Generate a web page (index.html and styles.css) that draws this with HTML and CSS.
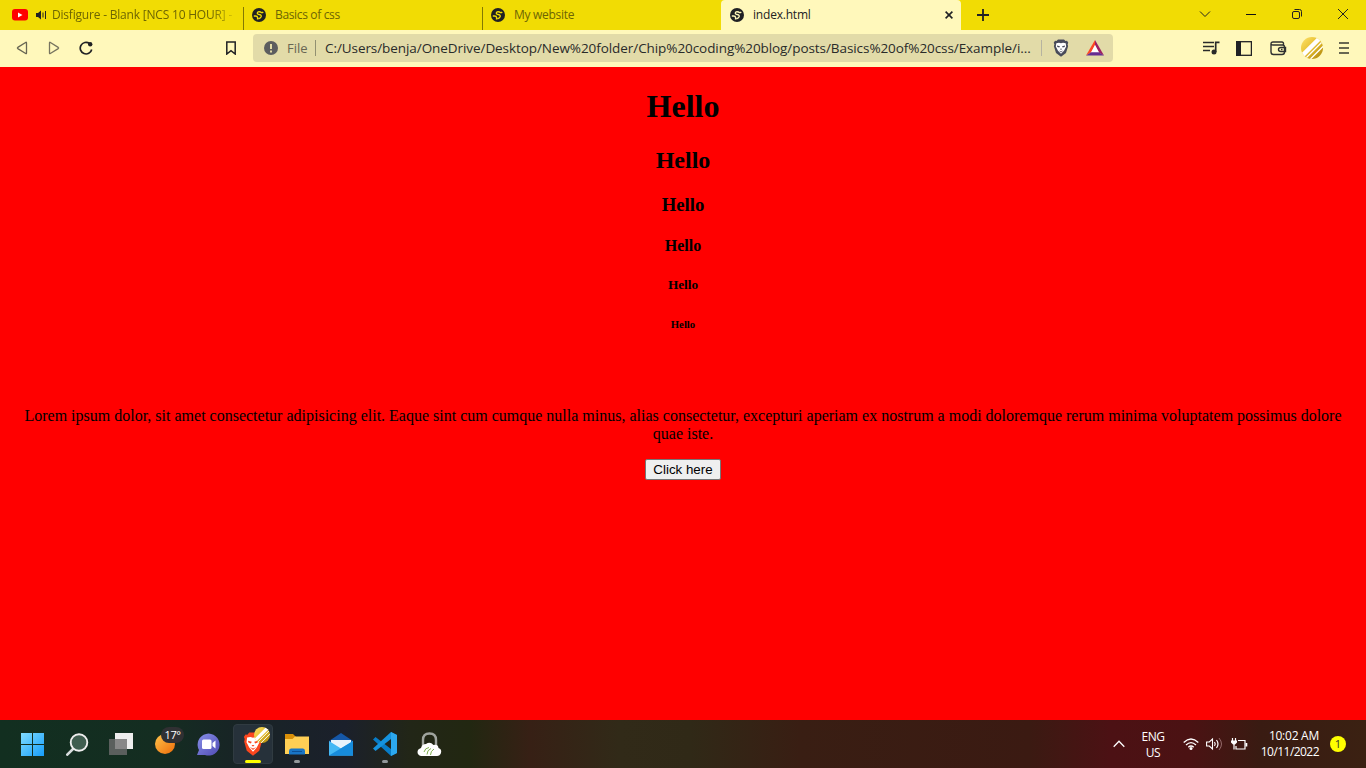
FILE: index.html
```html
<!DOCTYPE html>
<html lang="en">
<head>
<meta charset="utf-8">
<title>index.html</title>
<link rel="stylesheet" href="styles.css">
</head>
<body>
<svg class="defs" width="0" height="0">
  <symbol id="globe" viewBox="0 0 14 14"><circle cx="7" cy="7" r="7" fill="#202124"/><path d="M11.300 4.200Q9.800 5.200 8.500 4Q5.500 3.300 5.300 5.300Q5.500 6.500 8 6.700Q9.600 7.200 9.100 8.800Q8.500 10.300 6.500 10.800M1.800 8H3.500Q5.500 8 5.700 9.800L5.500 11.500" fill="none" stroke="currentColor" stroke-width="1.400"/></symbol>
  <symbol id="lion" viewBox="0 0 16 18"><path d="M3.500 2L5 .4h6L12.500 2l1.500-.2 1.300 2-.7 1.400.5 2L13 14l-5 3.800L3 14 .9 7.200l.5-2-.7-1.400 1.300-2Z" fill="currentColor"/><path d="M3.300 4.200L6 3.700 8 4.300 10 3.700 12.700 4.200 13.200 7.600 11 11.700 8 14.800 5 11.700 2.800 7.600Z" fill="#fff"/><path d="M4 6.500l3 .8-.7 1.300-2-.7ZM12 6.500l-3 .8.7 1.300 2-.7ZM6.800 9.700h2.400L8 11ZM5.500 11.300L8 12.400l2.500-1.100L8 13.500Z" fill="currentColor"/></symbol>
  <linearGradient id="gold" x1="0" y1="0" x2="1" y2="1"><stop stop-color="#ffe36b"/><stop offset=".5" stop-color="#e5bd2c"/><stop offset="1" stop-color="#a98008"/></linearGradient>
  <clipPath id="disc"><circle cx="11" cy="11" r="11"/></clipPath>
  <symbol id="avatar" viewBox="0 0 22 22"><g clip-path="url(#disc)"><path fill="url(#gold)" d="M0 0h22v22H0z"/><path d="M0 20L20 0" stroke="#fff" stroke-width="4.500"/><path d="M4.500 21.500L22 4M9.500 22L23 8.500" stroke="#fff" stroke-width="1.300"/></g></symbol>
</svg>

<header class="tabs">
  <div class="tab tab-media">
    <svg width="16" height="12" viewBox="0 0 16 12"><rect width="16" height="11.500" rx="3" fill="#f00"/><path d="M6 3.500v5L10.500 6Z" fill="#fff"/></svg>
    <svg class="sound" width="11" height="10" viewBox="0 0 11 10"><path d="M0 3h2L5 .5v9L2 7H0Z" fill="#202124"/><path d="M7 2.500v5M9.500 1v8" stroke="#202124" fill="none"/></svg>
    <span class="tab-text fade">Disfigure - Blank [NCS 10 HOUR] -</span>
  </div>
  <div class="tab ruled"><svg width="14" height="14"><use href="#globe"/></svg><span class="tab-text basics">Basics of css</span></div>
  <div class="tab ruled"><svg width="14" height="14"><use href="#globe"/></svg><span class="tab-text website">My website</span></div>
  <div class="tab active"><svg width="14" height="14"><use href="#globe"/></svg><span class="tab-text current">index.html</span>
    <svg class="close" width="8" height="8" viewBox="0 0 8 8"><path d="M.6.6l6.800 6.800M7.400.6L.6 7.400" stroke="#202124" stroke-width="1.600"/></svg></div>
  <svg class="plus" width="12" height="12" viewBox="0 0 12 12"><path d="M6 0v12M0 6h12" stroke="#202124" stroke-width="1.800"/></svg>
  <div class="window-buttons">
    <svg viewBox="0 0 12 12"><path d="M1 3.500l5 5 5-5" fill="none" stroke="#222"/></svg>
    <svg viewBox="0 0 12 12"><path d="M1 6.500h10" stroke="#111"/></svg>
    <svg viewBox="0 0 12 12"><rect x="1.500" y="3.500" width="7" height="7" rx="1.500" fill="none" stroke="#222"/><path d="M3.500 1.500H8.500Q10.500 1.500 10.500 3.500V8.500" fill="none" stroke="#222"/></svg>
    <svg viewBox="0 0 12 12"><path d="M1 1l10 10M11 1L1 11" stroke="#222"/></svg>
  </div>
</header>

<nav class="toolbar">
  <div class="nav-icons">
    <svg width="12" height="14" viewBox="0 0 12 14"><path d="M10 1.300Q10.500 1 10.500 2V12Q10.500 13 9.700 12.500L1.800 7.600Q1 7 1.800 6.400Z" fill="none" stroke="#686653" stroke-width="1.300"/></svg>
    <svg width="12" height="14" viewBox="0 0 12 14"><path d="M2 1.300Q1.500 1 1.500 2V12Q1.500 13 2.300 12.500L10.200 7.600Q11 7 10.200 6.400Z" fill="none" stroke="#77745f" stroke-width="1.300"/></svg>
    <svg class="reload" width="14" height="14" viewBox="0 0 14 14"><path d="M12.700 8.500A5.800 5.800 0 1 1 10.500 2.500" fill="none" stroke="#202124" stroke-width="1.700"/><circle cx="11.200" cy="3.200" r="2.200" fill="#202124"/></svg>
  </div>
  <svg class="bookmark" width="10" height="14" viewBox="0 0 10 14"><path d="M.8 1h8.400v12L5 9.600.8 13Z" fill="none" stroke="#202124" stroke-width="1.500"/></svg>
  <div class="address">
    <svg width="14" height="14" viewBox="0 0 14 14"><circle cx="7" cy="7" r="7" fill="#5c5d5f"/><path d="M7 3v5M7 9.500v2" stroke="#e2dba8" stroke-width="2"/></svg>
    <span class="scheme">File</span><i class="rule"></i>
    <span class="url">C:/Users/benja/OneDrive/Desktop/New%20folder/Chip%20coding%20blog/posts/Basics%20of%20css/Example/i...</span>
    <i class="rule pale"></i>
    <svg class="shield" width="16" height="18"><use href="#lion"/></svg>
    <svg width="18" height="16" viewBox="0 0 18 16"><path d="M9 0L0 15.500 5.500 12 9 5Z" fill="#ff4724"/><path d="M9 0l9 15.500-5.500-3.200L9 5Z" fill="#9e1f63"/><path d="M0 15.500h18l-5.500-3.500h-7Z" fill="#662d91"/><path d="M9 5L5 12.300h8Z" fill="#fff"/></svg>
  </div>
  <div class="tools">
    <svg width="17" height="14" viewBox="0 0 17 14"><path d="M0 1.500h11M0 5.500h11M0 9.500h7" stroke="#292a29" stroke-width="1.600"/><path d="M12.700 11V1.300h3.800" fill="none" stroke="#292a29" stroke-width="1.700"/><circle cx="11" cy="11" r="2.500" fill="#292a29"/></svg>
    <svg width="16" height="15" viewBox="0 0 16 15"><rect x=".6" y=".7" width="14.800" height="13.600" fill="none" stroke="#202124" stroke-width="1.300"/><path d="M0 0h5v15H0z" fill="#202124"/></svg>
    <svg class="wallet" width="17" height="15" viewBox="0 0 17 15"><path d="M13.500 4V2.500Q13.500 1 12 1H3Q1 1 1 3V11Q1 13.500 3.500 13.500H12Q14.500 13.500 14.500 11V6Q14.500 4 12.500 4H3Q1 4 1 2.800M15.500 6.500H11Q8.500 6.500 8.500 8.500T11 10.500H15.500Z" fill="none" stroke="#303130" stroke-width="1.400"/><path d="M11 8.500h1.500" stroke="#303130" stroke-width="1.500"/></svg>
    <svg class="profile" width="22" height="22"><use href="#avatar"/></svg>
    <svg class="menu" width="10" height="12" viewBox="0 0 10 12"><path d="M0 1h10M0 6h10M0 11h10" stroke="#393930" stroke-width="1.700"/></svg>
  </div>
</nav>

<main class="page">
  <h1>Hello</h1><h2>Hello</h2><h3>Hello</h3><h4>Hello</h4><h5>Hello</h5><h6>Hello</h6>
  <p>Lorem ipsum dolor, sit amet consectetur adipisicing elit. Eaque sint cum cumque nulla minus, alias consectetur, excepturi aperiam ex nostrum a modi doloremque rerum minima voluptatem possimus dolore quae iste.</p>
  <button>Click here</button>
</main>

<footer class="taskbar">
  <div class="apps">
    <div class="app start"><svg width="23" height="23" viewBox="0 0 23 23"><defs><linearGradient id="win" x1="0" y1="0" x2="1" y2="1" gradientUnits="objectBoundingBox"><stop stop-color="#80dcff"/><stop offset="1" stop-color="#169efa"/></linearGradient></defs><path d="M0 0h11v11H0zM12 0h11v11H12zM0 12h11v11H0zM12 12h11v11H12z" fill="url(#win)"/></svg></div>
    <div class="app"><svg width="23" height="23" viewBox="0 0 23 23"><path d="M7.500 15.500L1.300 21.700" stroke="#d8dddd" stroke-width="2.600" stroke-linecap="round"/><circle cx="13" cy="9.500" r="8.300" fill="#405e50" stroke="#eee" stroke-width="1.900"/></svg></div>
    <div class="app"><svg width="24" height="22" viewBox="0 0 24 22"><path d="M6 0h18v16H6z" fill="#eee"/><path d="M0 6h18v16H0z" fill="#5a5f5d"/><path d="M6 6h12v10H6z" fill="#888"/></svg></div>
    <div class="app weather"><svg width="20" height="20" viewBox="0 0 20 20"><defs><linearGradient id="sun" x2="1" y2="1"><stop stop-color="#ffc44b"/><stop offset="1" stop-color="#ed6c09"/></linearGradient></defs><circle cx="10" cy="10" r="10" fill="url(#sun)"/></svg><span class="temp">17°</span></div>
    <div class="app start"><svg width="23" height="23" viewBox="0 0 23 23"><defs><linearGradient id="chat" x1="0" x2="1" y2="1"><stop stop-color="#8890e8"/><stop offset="1" stop-color="#504bb5"/></linearGradient></defs><path d="M0 22l2-5A11 11 0 1 1 8 22Z" fill="url(#chat)"/><rect x="5" y="6.500" width="9.500" height="9.500" rx="1.500" fill="#fff"/><path d="M15.500 10L18.500 7.500v8l-3-2.500Z" fill="#fff"/></svg></div>
    <div class="app selected"><svg class="brave" width="20" height="24" viewBox="0 0 16 18" preserveAspectRatio="none"><use href="#lion" width="16" height="18"/></svg><svg class="badge" width="16" height="16"><use href="#avatar"/></svg></div>
    <div class="app running"><svg width="24" height="23" viewBox="0 0 24 23"><path d="M0 1h8l3 3v4H0z" fill="#d98f08"/><path d="M0 6h7.500L10 3.500h14V21H0z" fill="#ffcf55"/><path d="M4 21.500V18Q4 15.500 6 15.500H18Q20 15.500 20 18V21.500Z" fill="#1975c5"/><path d="M7 18.500h10" stroke="#0d4f94"/></svg></div>
    <div class="app"><svg width="24" height="23" viewBox="0 0 24 23"><path d="M0 8L12 0l12 8v14.500H0z" fill="#1557a7"/><path d="M2 7h20v4L12 16 2 11Z" fill="#e9f3fb"/><path d="M0 8l12 7.500L24 8v14.500H0z" fill="#45b8f4"/><path d="M0 22.500L24 8v14.500Z" fill="#178bdc"/></svg></div>
    <div class="app running"><svg width="24" height="24" viewBox="0 0 24 24"><path d="M18 0l6 3v18l-6 3L0 7.500 2.500 5 18 17Z" fill="#087cc7"/><path d="M18 0v7L2.500 19 0 16.500Z" fill="#1593df"/><path d="M18 0l6 3v18l-6 3Z" fill="#2ca8ee"/></svg></div>
    <div class="app"><svg width="25" height="25" viewBox="0 0 25 25"><path d="M6 14V8Q6 1.500 12.500 1.500T19 8v6" fill="none" stroke="#a0a49e" stroke-width="2.400"/><path d="M4 24Q.5 23 .5 20T4 16Q5 12 9 12Q13 9 16.500 13Q21 12 21.500 16Q25 17 24 21Q23 24 20 24Z" fill="#fff"/><path d="M7 20Q8 16 12 15.500M10 22.500Q10 18 14 16.500M13.500 23Q13.500 19 17 17" fill="none" stroke="#80ae4d" stroke-width="1"/></svg></div>
  </div>
  <div class="tray">
    <svg class="chevron" width="12" height="8" viewBox="0 0 12 8"><path d="M.7 6.700L6 1.300l5.300 5.400" fill="none" stroke="#fff" stroke-width="1.300"/></svg>
    <div class="language">ENG<br>US</div>
    <svg class="wifi" width="16" height="12" viewBox="0 0 16 12"><path d="M.7 4.500Q8-2.500 15.300 4.500M3 7Q8 2.200 13 7M5.300 9.200Q8 6.700 10.700 9.200" fill="none" stroke="#fff" stroke-width="1.300"/><circle cx="8" cy="10.500" r="1.500" fill="#fff"/></svg>
    <svg class="speaker" width="17" height="14" viewBox="0 0 17 14"><path d="M.6 5h2.700L6.500 2v10L3.300 9H.6Z" fill="none" stroke="#fff" stroke-width="1.100"/><path d="M8.500 5Q10 7 8.500 9M10.500 3Q13.500 7 10.500 11" fill="none" stroke="#fff" stroke-width="1.200"/><path d="M13 1Q18 7 13 13" fill="none" stroke="#956a6b"/></svg>
    <svg class="battery" width="17" height="13" viewBox="0 0 17 13"><path d="M7 2.500h7v8.500H5V8M1.500 0v3M4.500 0v3M3 5v6.500" fill="none" stroke="#fff" stroke-width="1.200"/><path d="M0 2.500h6v2L4 6.500H2L0 4.500ZM14.500 5h1.800v3.500h-1.800z" fill="#fff"/></svg>
    <div class="clock"><span class="time">10:02 AM</span><span class="date">10/11/2022</span></div>
    <div class="notice">1</div>
  </div>
</footer>
</body>
</html>
```

FILE: styles.css
```css
* { box-sizing: border-box; }
body { margin: 0; width: 1366px; height: 768px; overflow: hidden; display: flex; flex-direction: column; font-family: "Open Sans", "Noto Sans", sans-serif; }
svg { display: block; flex: none; }
.defs { position: absolute; }
.tabs { height: 30px; flex: none; display: flex; background: #f1dc04; color: #f1dc04; }
.tab { display: flex; align-items: center; width: 239px; height: 30px; padding-left: 9px; }
.tab-media { width: 243px; padding-left: 12px; }
.sound { margin: 0 5px 0 8px; }
.tab-text { font-size: 12px; line-height: 18px; color: #6d6503; white-space: nowrap; margin-left: 9px; letter-spacing: -.2px; }
.basics { letter-spacing: -.35px; }
.website { letter-spacing: -.3px; }
.fade { width: 181px; margin-left: 0; overflow: hidden; -webkit-mask-image: linear-gradient(to right, #000 88%, #0003); }
.ruled { background: linear-gradient(#837902, #837902) 0 100% / 1px 23px no-repeat; }
.active { width: 240px; background: #fff8bb; color: #fff8bb; border-radius: 4px 4px 0 0; }
.current { color: #222; }
.close { margin-left: auto; margin-right: 8px; }
.plus { margin: 9px 0 0 16px; }
.window-buttons { display: flex; gap: 34px; margin: 8px 17px 0 auto; }
.window-buttons svg { width: 12px; height: 12px; }
.toolbar { height: 37px; flex: none; display: flex; align-items: center; background: #fff8bb; padding-bottom: 1px; }
.nav-icons { display: flex; align-items: center; gap: 20px; padding-left: 16px; }
.reload { margin-left: -1px; }
.bookmark { margin-left: 133px; }
.address { width: 860px; height: 28px; margin-left: 17px; background: #e2dba8; border-radius: 4px; display: flex; align-items: center; padding: 0 9px 0 11px; color: #292a29; font-size: 14px; white-space: nowrap; }
.scheme { color: #686653; font-size: 13px; width: 21px; margin-left: 9px; }
.rule { width: 1px; height: 16px; background: #929071; margin: 0 9px 0 7px; }
.url { width: 708px; font-size: 13.5px; letter-spacing: -.07px; }
.pale { background: #b6b3a0; margin: 0 11px 0 9px; }
.shield { color: #484b59; margin-right: 17px; }
.tools { display: flex; align-items: center; margin-left: auto; margin-right: 17px; gap: 16px; }
.wallet { margin-left: 2px; }
.profile { margin-left: -2px; }
.page { height: 653px; flex: none; background: #f00; padding: 0 8px; text-align: center; color: #000; font: 16px "Liberation Serif", "Times New Roman", serif; display: flow-root; }
.page p { margin: 77px 0 16px; line-height: 18px; }
.page button { width: 76px; height: 21px; padding: 0; font: 13.33px "Liberation Sans", Arial, sans-serif; background: #efefef; border: 1px solid #767676; border-radius: 2px; color: #000; }
.taskbar { height: 48px; flex: none; display: flex; background: linear-gradient(90deg, #122f20 0, #142d21 160px, #182326 245px, #1b202b 345px, #222617 410px, #222711 470px, #372015 530px, #312a18 620px, #302917 690px, #391e13 800px, #3b1a12 1030px, #4c1114 1110px, #4b1213 1190px, #391b12 1260px, #3b2112 1366px); color: #fff; }
.apps { display: flex; padding-left: 11px; }
.app { width: 44px; height: 48px; position: relative; display: flex; align-items: center; justify-content: center; }
.start { padding-right: 1px; }
.temp { position: absolute; left: 18px; top: 7px; width: 23px; height: 16px; border-radius: 8px; background: #303033; color: #fff; font-size: 11px; line-height: 16px; text-align: center; letter-spacing: -.5px; }
.selected::before { content: ""; position: absolute; inset: 4px 2px; border-radius: 4px; background: #26313a; border: 1px solid #303b41; }
.selected::after { content: ""; position: absolute; left: 14px; bottom: 5px; width: 16px; height: 3px; border-radius: 2px; background: #ff0; }
.brave { position: relative; color: #fb461e; }
.badge { position: absolute; left: 23px; top: 7px; }
.running::after { content: ""; position: absolute; left: 19px; bottom: 5px; width: 6px; height: 3px; border-radius: 2px; background: #92989b; }
.tray { display: flex; align-items: center; margin-left: auto; padding-right: 20px; font-size: 12px; line-height: 16px; }
.language { width: 30px; margin: 2px 15px 0 13px; text-align: center; letter-spacing: -.4px; }
.wifi { margin-right: 7px; }
.speaker { margin-right: 8px; }
.clock { width: 57px; margin-left: 14px; display: flex; flex-direction: column; align-items: flex-end; white-space: nowrap; letter-spacing: -.55px; }
.time { letter-spacing: -.25px; }
.notice { width: 16px; height: 16px; border-radius: 50%; background: #ff0; color: #333; text-align: center; font-size: 11px; line-height: 16px; margin-left: 11px; }
```
